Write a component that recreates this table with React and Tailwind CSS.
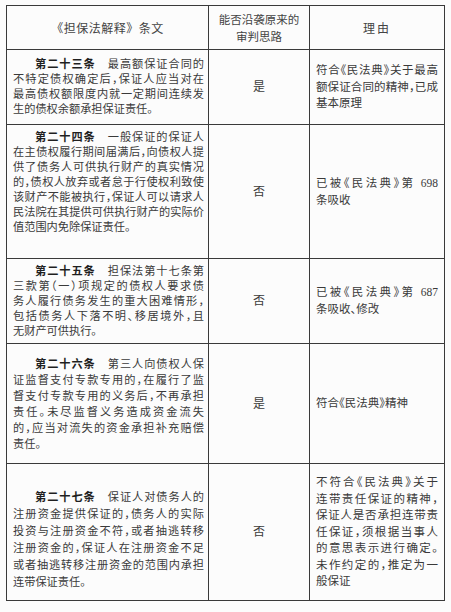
import React from 'react';

const rows = [
  {
    h: 'h-[75px]',
    title: '第二十三条',
    first: '最高额保证合同的',
    left: ['不特定债权确定后，保证人应当对在', '最高债权额限度内就一定期间连续发', '生的债权余额承担保证责任。'],
    leftBox: 'justify-center leading-[15px]',
    verdict: '是',
    right: ['符合《民法典》关于最高', '额保证合同的精神，已成', '基本原理'],
    rightBox: 'justify-center leading-[16.5px]',
  },
  {
    h: 'h-[134px]',
    title: '第二十四条',
    first: '一般保证的保证人',
    left: [
      '在主债权履行期间届满后，向债权人提',
      '供了债务人可供执行财产的真实情况',
      '的，债权人放弃或者怠于行使权利致使',
      '该财产不能被执行，保证人可以请求人',
      '民法院在其提供可供执行财产的实际价',
      '值范围内免除保证责任。',
    ],
    leftBox: 'justify-start pt-[5px] leading-[15px]',
    verdict: '否',
    right: ['已被《民法典》第 698', '条吸收'],
    rightBox: 'justify-center leading-[17px]',
  },
  {
    h: 'h-[85px]',
    title: '第二十五条',
    first: '担保法第十七条第',
    left: [
      '三款第（一）项规定的债权人要求债',
      '务人履行债务发生的重大困难情形，',
      '包括债务人下落不明、移居境外，且',
      '无财产可供执行。',
    ],
    leftBox: 'justify-center leading-[15px]',
    verdict: '否',
    right: ['已被《民法典》第 687', '条吸收、修改'],
    rightBox: 'justify-center leading-[17px]',
  },
  {
    h: 'h-[120px]',
    title: '第二十六条',
    first: '第三人向债权人保',
    left: [
      '证监督支付专款专用的，在履行了监',
      '督支付专款专用的义务后，不再承担',
      '责任。未尽监督义务造成资金流失',
      '的，应当对流失的资金承担补充赔偿',
      '责任。',
    ],
    leftBox: 'justify-center leading-[16px]',
    verdict: '是',
    right: ['符合《民法典》精神'],
    rightBox: 'justify-center leading-[17px]',
  },
  {
    h: 'h-[137px]',
    title: '第二十七条',
    first: '保证人对债务人的',
    left: [
      '注册资金提供保证的，债务人的实际',
      '投资与注册资金不符，或者抽逃转移',
      '注册资金的，保证人在注册资金不足',
      '或者抽逃转移注册资金的范围内承担',
      '连带保证责任。',
    ],
    leftBox: 'justify-center pt-[16px] leading-[17px]',
    verdict: '否',
    right: [
      '不符合《民法典》关于',
      '连带责任保证的精神，',
      '保证人是否承担连带责',
      '任保证，须根据当事人',
      '的意思表示进行确定。',
      '未作约定的，推定为一',
      '般保证',
    ],
    rightBox: 'justify-center leading-[16.5px]',
  },
];

const Line = ({ last, className = '', children }) => (
  <div className={`${last ? '' : 'text-justify [text-align-last:justify]'} ${className}`}>{children}</div>
);

const Row = ({ r }) => (
  <div className={`grid grid-cols-[201px_101px_135px] border-t border-[#3a3a3a] ${r.h}`}>
    <div className={`flex flex-col pl-[6px] pr-[4px] text-[11.2px] ${r.leftBox}`}>
      <Line className="pl-[22px]">
        <span className="font-bold text-[#1f1f1f]">{r.title}</span>　{r.first}
      </Line>
      {r.left.map((t, i) => (
        <Line key={i} last={i === r.left.length - 1}>{t}</Line>
      ))}
    </div>
    <div className="flex items-center justify-center border-l border-[#3a3a3a] text-[12px]">{r.verdict}</div>
    <div className={`flex flex-col border-l border-[#3a3a3a] px-[6px] ${r.rightBox}`}>
      {r.right.map((t, i) => (
        <Line key={i} last={i === r.right.length - 1}>{t}</Line>
      ))}
    </div>
  </div>
);

export default function App() {
  return (
    <div className="min-h-screen w-[451px] bg-[#fcfcfc] pt-[5px] pl-[6px] text-[#3a3a3a] font-['Liberation_Serif','Noto_Sans_CJK_SC',serif]">
      <div className="w-[439px] border border-[#3a3a3a] text-[11.5px] [font-feature-settings:'halt']">
        <div className="grid h-[43px] grid-cols-[201px_101px_135px] font-['Noto_Sans_CJK_SC',sans-serif] text-[#444]">
          <div className="flex items-center justify-center text-[12px] tracking-[0.5px] [font-feature-settings:normal]">
            《担保法解释》条文
          </div>
          <div className="flex flex-col items-center justify-center border-l border-[#3a3a3a] text-[11.5px] leading-[17px]">
            <span>能否沿袭原来的</span>
            <span>审判思路</span>
          </div>
          <div className="flex items-center justify-center border-l border-[#3a3a3a] text-[12px] tracking-[2px]">
            理由
          </div>
        </div>
        {rows.map((r, i) => (
          <Row key={i} r={r} />
        ))}
      </div>
    </div>
  );
}
